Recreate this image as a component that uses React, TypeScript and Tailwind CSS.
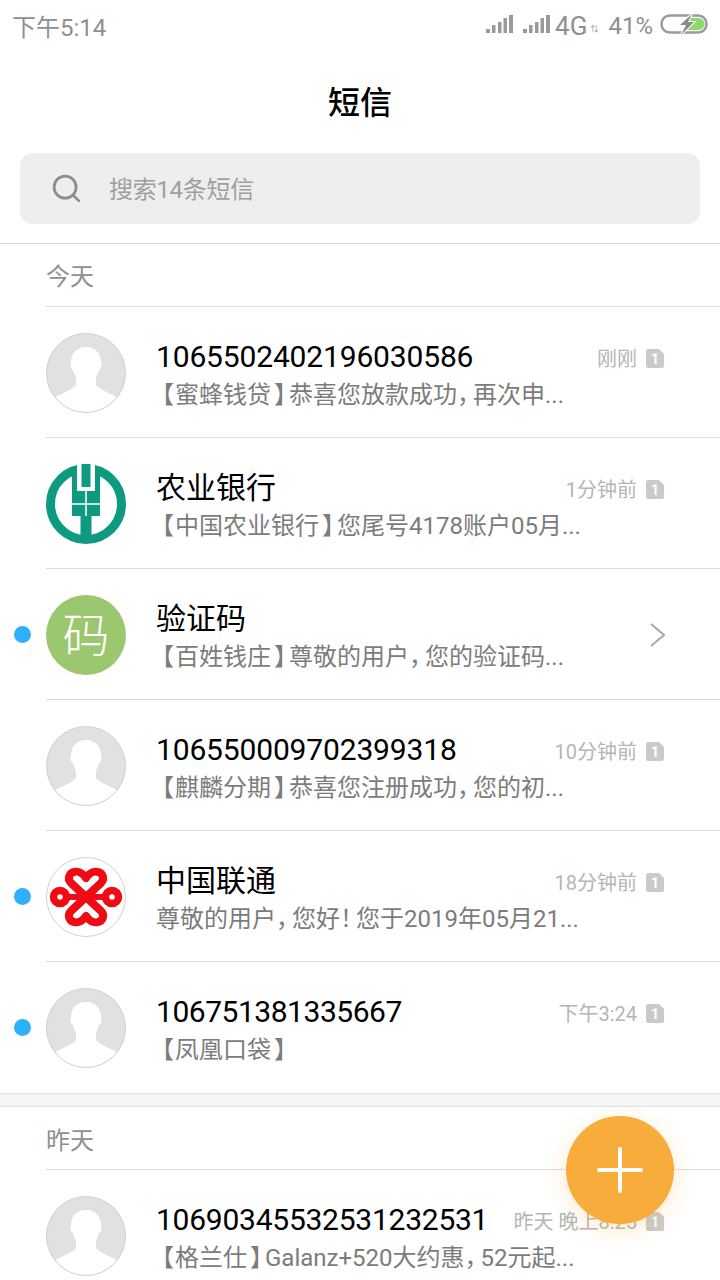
import React from "react";
import { Search, Plus } from "lucide-react";

const CJK = "font-['Roboto','Noto_Sans_CJK_SC',sans-serif]";

const Person = () => (
  <svg viewBox="0 0 80 80" className="w-20 h-20 block">
    <defs>
      <clipPath id="pc">
        <circle cx="40" cy="40" r="39.5" />
      </clipPath>
    </defs>
    <circle cx="40" cy="40" r="39.5" fill="#e0e1e3" />
    <path
      clipPath="url(#pc)"
      fill="#fff"
      d="M40 14C50 14 55 21 55 29C56 31 56 36 53 37C52 41 50 44 50 46L50 52C52 55 60 59 69 63L80 80L0 80L11 63C20 59 28 55 30 52L30 46C30 44 28 41 27 37C24 36 24 31 25 29C25 21 30 14 40 14Z"
    />
    <circle cx="40" cy="40" r="39.5" fill="none" stroke="#cfcfcf" />
  </svg>
);

const AbcLogo = () => (
  <svg viewBox="0 0 80 80" className="w-20 h-20 block">
    <circle cx="40" cy="40" r="35.5" fill="#fff" stroke="#0d9a80" strokeWidth="9" />
    <path fill="#0d9a80" d="M26 3H54V52H45.5V76H34.5V52H26Z" />
    <path fill="#fff" d="M31 -1H49V27H31Z" />
    <path fill="#0d9a80" d="M35.5 0H44.5V23H35.5Z" />
    <path stroke="#fff" strokeWidth="1.5" fill="none" d="M40 27V52M26 40H54" />
  </svg>
);

const UnicomLogo = () => (
  <svg viewBox="0 0 80 80" className="w-20 h-20 block">
    <circle cx="40" cy="40" r="39.5" fill="#fff" stroke="#d2d2d2" />
    <g fill="none" stroke="#f00a14" strokeWidth="8" strokeLinejoin="round">
      <path d="M40 21C36 15 31 14 28 15C23 16 21 22 25 26L55 54C59 58 57 64 52 65C49 66 44 65 40 59C36 65 31 66 28 65C23 64 21 58 25 54L55 26C59 22 57 16 52 15C49 14 44 15 40 21Z" />
      <path d="M20 40H60" strokeWidth="6" />
      <circle cx="14" cy="40" r="6.5" strokeWidth="7.5" />
      <circle cx="66" cy="40" r="6.5" strokeWidth="7.5" />
    </g>
  </svg>
);

const CodeAvatar = () => (
  <div className="w-20 h-20 rounded-full bg-[#9bc76f] flex items-center justify-center text-white text-[47px] font-light leading-none">
    码
  </div>
);

const Badge = () => (
  <svg viewBox="0 0 18 19" className="w-[18px] h-[19px] block">
    <path fill="#cacaca" d="M2 0H13L18 5V17a2 2 0 0 1-2 2H2a2 2 0 0 1-2-2V2a2 2 0 0 1 2-2Z" />
    <text x="9" y="15" textAnchor="middle" fontSize="14" fontWeight="700" fill="#fff" fontFamily="Roboto">
      1
    </text>
  </svg>
);

const Signal = () => (
  <svg viewBox="0 0 27 18" className="w-[27px] h-[18px] block mb-[4px]" fill="#9a9a9a">
    <rect x="0" y="14" width="4" height="4" />
    <rect x="6" y="10" width="3.5" height="8" />
    <rect x="12" y="7" width="3.5" height="11" />
    <rect x="17.5" y="3" width="3.5" height="15" />
    <rect x="23" y="0" width="4" height="18" />
  </svg>
);

const Battery = () => (
  <svg viewBox="0 0 48 20" className="w-12 h-5 block mb-[4px] overflow-visible">
    <path fill="none" stroke="#9a9a9a" strokeWidth="2.5" d="M10 1.5H38C43 1.5 46.5 5 46.5 10C46.5 15 43 18.5 38 18.5H10C5 18.5 1.5 15 1.5 10C1.5 5 5 1.5 10 1.5Z" />
    <path fill="#8fd86f" d="M28 4H38C42 4 44.5 7 44.5 10C44.5 13 42 16 38 16H25Z" />
    <path fill="#8a8a8a" stroke="#fff" strokeWidth="2" paintOrder="stroke" d="M32 0L20 11H26L21 21L34 8H28Z" />
  </svg>
);

// full-width punctuation in the reference font takes less room than in Noto
const Preview = ({ text }: { text: string }) => (
  <>
    {text.split(/([【】，！])/).map((part, i) =>
      part === "【" ? (
        <span key={i} className="-ml-[6px] tracking-[1px]">{part}</span>
      ) : part === "】" ? (
        <span key={i} className="ml-[3px] tracking-[-9px]">{part}</span>
      ) : part === "，" || part === "！" ? (
        <span key={i} className="tracking-[-8px]">{part}</span>
      ) : (
        <span key={i}>{part}</span>
      )
    )}
  </>
);

type Row = {
  name: string;
  nameClass?: string;
  text: string;
  time?: string;
  avatar: React.ReactNode;
  dot?: boolean;
};

const today: Row[] = [
  { name: "1065502402196030586", nameClass: "tracking-[-0.16px]", text: "【蜜蜂钱贷】恭喜您放款成功，再次申...", time: "刚刚", avatar: <Person /> },
  { name: "农业银行", text: "【中国农业银行】您尾号4178账户05月...", time: "1分钟前", avatar: <AbcLogo /> },
  { name: "验证码", text: "【百姓钱庄】尊敬的用户，您的验证码...", avatar: <CodeAvatar />, dot: true },
  { name: "106550009702399318", nameClass: "tracking-[-0.16px]", text: "【麒麟分期】恭喜您注册成功，您的初...", time: "10分钟前", avatar: <Person /> },
  { name: "中国联通", text: "尊敬的用户，您好！您于2019年05月21...", time: "18分钟前", avatar: <UnicomLogo />, dot: true },
  { name: "106751381335667", nameClass: "tracking-[-0.47px]", text: "【凤凰口袋】", time: "下午3:24", avatar: <Person />, dot: true },
];

const yesterday: Row = {
  name: "10690345532531232531",
  nameClass: "tracking-[-0.25px]",
  text: "【格兰仕】Galanz+520大约惠，52元起...",
  time: "昨天 晚上8:25",
  avatar: <Person />,
};

const MessageRow = ({ row, last }: { row: Row; last?: boolean }) => (
  <div className="flex">
    <div className="w-[46px] shrink-0 flex items-center pl-[14px]">
      {row.dot && <div className="w-[17px] h-[17px] rounded-full bg-[#2fb0fd]" />}
    </div>
    <div className={`flex-1 h-[131px] flex items-center pt-[2px] border-b ${last ? "border-transparent" : "border-[#dcdcdc]"}`}>
      <div className="shrink-0">{row.avatar}</div>
      <div className="flex-1 min-w-0 pl-[30px] pt-[5px]">
        <div className="flex items-center h-[38px]">
          <div className={`flex-1 text-[30px] leading-[38px] text-black whitespace-nowrap ${row.nameClass ?? ""}`}>{row.name}</div>
          {row.time && (
            <div className="flex items-center pr-[56px] mt-[2px]">
              <span className="text-[20px] text-[#b5b5b5] leading-none whitespace-nowrap mt-px mr-[-1px]">{row.time}</span>
              <span className="ml-[10px]">
                <Badge />
              </span>
            </div>
          )}
        </div>
        <div className="mt-px text-[24px] leading-[36px] text-[#7c7c7c] whitespace-nowrap">
          <Preview text={row.text} />
        </div>
      </div>
      {!row.time && (
        <svg viewBox="0 0 15 24" className="w-[15px] h-6 mr-[55px] shrink-0" fill="none" stroke="#a8a8a8" strokeWidth="2">
          <path d="M1 1L14 12L1 23" />
        </svg>
      )}
    </div>
  </div>
);

export default function App() {
  return (
    <div className={`relative w-[720px] h-[1280px] overflow-hidden bg-white ${CJK}`}>
      <div className="h-[52px] flex items-center justify-between pl-3 pr-3 text-[#8f8f8f]">
        <span className="text-[24px] leading-none pt-[3px]">下午5:14</span>
        <div className="flex items-center">
          <Signal />
          <span className="w-[10px]" />
          <Signal />
          <span className="text-[26px] leading-none ml-[5px]">4G</span>
          <span className="text-[8px] leading-none mt-2 w-[21px] pl-[3px]">⇅</span>
          <span className="text-[24px] leading-none">41%</span>
          <span className="ml-[7px]">
            <Battery />
          </span>
        </div>
      </div>
      <div className="h-[101px] pt-px flex items-center justify-center text-[32px] font-medium text-black">短信</div>
      <div className="mx-5 h-[71px] rounded-[13px] bg-[#eeeeee] flex items-center pl-[30px]">
        <Search className="text-[#8e8e8e]" size={33} strokeWidth={2} />
        <span className="ml-[26px] text-[24px] text-[#a0a0a0] tracking-[-0.3px] pt-[2px]">搜索14条短信</span>
      </div>
      <div className="mt-[19px] border-t border-[#dcdcdc]" />
      <div className="pl-[46px]">
        <div className="h-[63px] pt-[4px] flex items-center border-b border-[#dcdcdc] text-[24px] text-[#8f8f8f]">今天</div>
      </div>
      {today.map((row, i) => (
        <MessageRow key={i} row={row} last={i === today.length - 1} />
      ))}
      <div className="h-[14px] bg-[#f6f6f6] border-y border-[#e2e2e2]" />
      <div className="pl-[46px]">
        <div className="h-[63px] pt-[5px] flex items-center border-b border-[#dcdcdc] text-[24px] text-[#8f8f8f]">昨天</div>
      </div>
      <MessageRow row={yesterday} />
      <div className="absolute left-[566px] top-[1116px] w-[108px] h-[108px] rounded-full bg-[#f7ac3c] shadow-[0_6px_24px_rgba(247,172,60,0.25)] flex items-center justify-center">
        <Plus className="text-white" size={72} strokeWidth={1.3} />
      </div>
    </div>
  );
}
